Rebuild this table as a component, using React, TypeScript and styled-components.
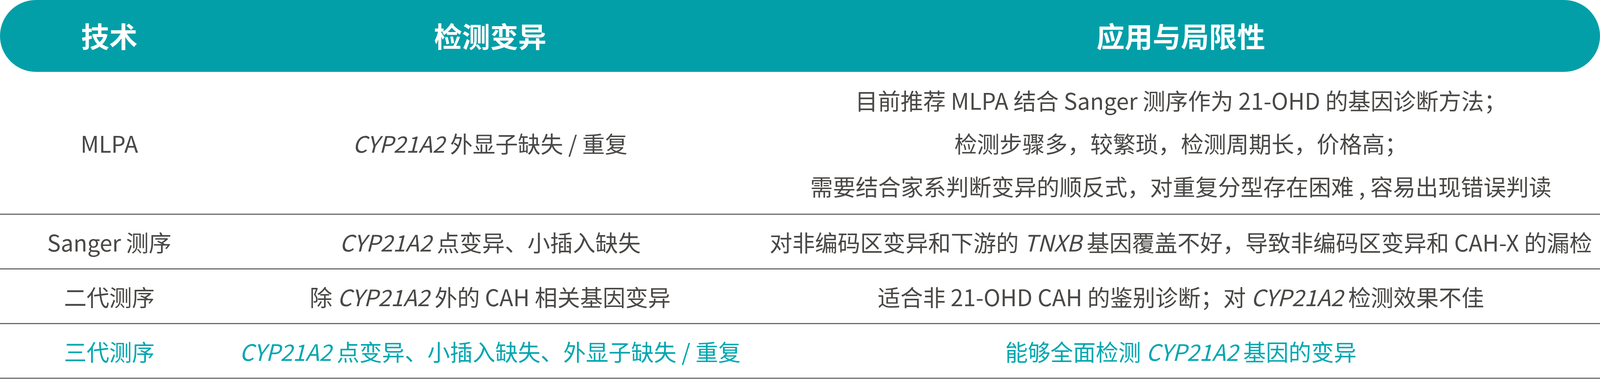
import React from 'react'
import styled, { createGlobalStyle } from 'styled-components'

const GlobalStyle = createGlobalStyle`
  html, body {
    margin: 0;
    padding: 0;
    background: #ffffff;
  }
  body {
    font-family: "Noto Sans CJK SC", "Noto Sans", sans-serif;
  }
`

const TEAL = '#029fa8'
const TEXT = '#4a4846'
// column split of the original 6016px wide table: 822 / 2042 / 3152
const COLS = 'minmax(0, 822fr) minmax(0, 2042fr) minmax(0, 3152fr)'

type Row = {
  tech: React.ReactNode
  variant: React.ReactNode
  usage: React.ReactNode[]
  highlight?: boolean
  tall?: boolean
}

const Gene = ({ children }: { children: React.ReactNode }) => <Ital>{children}</Ital>

const rows: Row[] = [
  {
    tech: 'MLPA',
    variant: <><Gene>CYP21A2</Gene> 外显子缺失 / 重复</>,
    usage: [
      '目前推荐 MLPA 结合 Sanger 测序作为 21-OHD 的基因诊断方法；',
      '检测步骤多，较繁琐，检测周期长，价格高；',
      '需要结合家系判断变异的顺反式，对重复分型存在困难 , 容易出现错误判读',
    ],
    tall: true,
  },
  {
    tech: 'Sanger 测序',
    variant: <><Gene>CYP21A2</Gene> 点变异、小插入缺失</>,
    usage: [<>对非编码区变异和下游的 <Gene>TNXB</Gene> 基因覆盖不好，导致非编码区变异和 CAH-X 的漏检</>],
  },
  {
    tech: '二代测序',
    variant: <>除 <Gene>CYP21A2</Gene> 外的 CAH 相关基因变异</>,
    usage: [<>适合非 21-OHD CAH 的鉴别诊断；对 <Gene>CYP21A2</Gene> 检测效果不佳</>],
  },
  {
    tech: '三代测序',
    variant: <><Gene>CYP21A2</Gene> 点变异、小插入缺失、外显子缺失 / 重复</>,
    usage: [<>能够全面检测 <Gene>CYP21A2</Gene> 基因的变异</>],
    highlight: true,
  },
]

export default function App() {
  return (
    <>
      <GlobalStyle />
      <Table>
        <HeaderBar>
          <HeadCell>技术</HeadCell>
          <HeadCell>检测变异</HeadCell>
          <HeadCell>应用与局限性</HeadCell>
        </HeaderBar>
        {rows.map((r, i) => (
          <BodyRow key={i} $tall={r.tall} $highlight={r.highlight}>
            <Cell>{r.tech}</Cell>
            <Cell>{r.variant}</Cell>
            <Cell>
              {r.usage.map((line, j) => (
                <Line key={j}>{line}</Line>
              ))}
            </Cell>
          </BodyRow>
        ))}
      </Table>
    </>
  )
}

const Table = styled.div`
  width: 100%;
  display: flex;
  flex-direction: column;
`

const HeaderBar = styled.div`
  height: 184px;
  display: grid;
  grid-template-columns: ${COLS};
  align-items: center;
  background: ${TEAL};
  border-radius: 92px;
`

const HeadCell = styled.div`
  text-align: center;
  color: #ffffff;
  /* 88px on a 6016px wide page, smaller when the window is narrower */
  font-size: calc(37.87px + 0.8333vw);
  font-weight: 700;
  line-height: 1;
  padding-bottom: 4px;
`

const BodyRow = styled.div<{ $tall?: boolean; $highlight?: boolean }>`
  box-sizing: border-box;
  height: ${(p) => (p.$tall ? 366 : 140)}px;
  display: grid;
  grid-template-columns: ${COLS};
  align-items: center;
  border-bottom: 3px solid #6b6b6b;
  color: ${(p) => (p.$highlight ? '#00a7b0' : TEXT)};
  /* 78px at 6016px wide */
  font-size: calc(15.33px + 1.0417vw);
`

const Cell = styled.div`
  text-align: center;
  white-space: nowrap;
  line-height: 110px;
`

const Line = styled.div`
  white-space: nowrap;
`

const Ital = styled.span`
  font-style: italic;
`
